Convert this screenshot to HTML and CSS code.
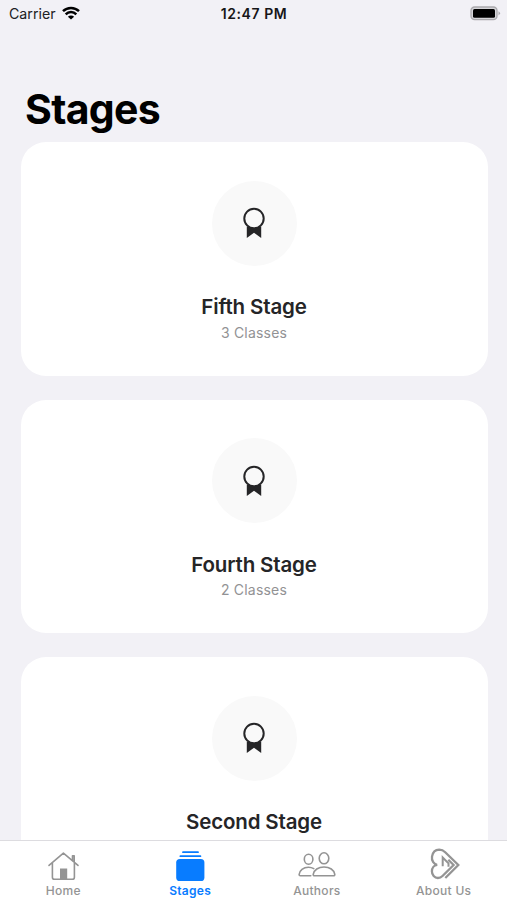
FILE: index.html
```html
<!DOCTYPE html>
<html lang="en">
<head>
<meta charset="utf-8">
<title>Stages</title>
<link rel="stylesheet" href="styles.css">
</head>
<body>
<svg class="defs" aria-hidden="true">
  <symbol id="ribbon" viewBox="0 0 24 32">
    <path d="M4.8 19.5h14.4v11.4l-7.2-5.2-7.2 5.2z" fill="#252527"/>
    <circle cx="12" cy="11.5" r="9.7" fill="#f9f9f9" stroke="#252527" stroke-width="2"/>
  </symbol>
</svg>
<div class="screen">
  <header class="status">
    <div class="status-left">
      <span class="carrier">Carrier</span>
      <svg class="wifi" viewBox="0 0 18 14" width="18" height="14">
        <path d="M1 5.2a11.4 11.4 0 0 1 16 0M3.7 8.3a7.5 7.5 0 0 1 10.6 0" fill="none" stroke="#000" stroke-width="2.5"/>
        <path d="M9 13.6 5.9 10.7a4.4 4.4 0 0 1 6.2 0z"/>
      </svg>
    </div>
    <span class="clock">12:47 PM</span>
    <div class="status-right">
      <svg viewBox="0 0 31 15" width="31" height="15">
        <rect x="1" y="1" width="26" height="12.6" rx="3.6" fill="#d6d5d9" stroke="#aaa9ad" stroke-width="1.3"/>
        <rect x="3" y="3" width="22" height="8.8" rx="1.5"/>
        <path d="M28.5 5.2q3 2.1 0 4.2z" fill="#aaa9ad"/>
      </svg>
    </div>
  </header>
  <h1>Stages</h1>
  <main class="list">
    <section class="card">
      <div class="badge"><svg class="ribbon"><use href="#ribbon"/></svg></div>
      <h2>Fifth Stage</h2>
      <p>3 Classes</p>
    </section>
    <section class="card">
      <div class="badge"><svg class="ribbon"><use href="#ribbon"/></svg></div>
      <h2>Fourth Stage</h2>
      <p>2 Classes</p>
    </section>
    <section class="card">
      <div class="badge"><svg class="ribbon"><use href="#ribbon"/></svg></div>
      <h2>Second Stage</h2>
    </section>
  </main>
  <nav class="tabs">
    <a class="tab">
      <svg viewBox="0 0 40 36" fill="none" stroke="currentColor" stroke-width="1.6" stroke-linecap="round" stroke-linejoin="round">
        <path d="M6 19.4 20.4 7.2 35 19.4M9.4 17v14.2q0 2.1 2.1 2.1h17.8q2.1 0 2.1-2.1V17M29.5 14.3V9.7h1.7v6.1"/>
        <path d="M17 22.5h7.2v10.8H17z" fill="currentColor" stroke="none"/>
      </svg>
      <span>Home</span>
    </a>
    <a class="tab active">
      <svg viewBox="0 0 40 36" fill="none" stroke="currentColor" stroke-width="1.8" stroke-linecap="round">
        <rect x="6.2" y="13" width="28.2" height="22" rx="3.6" fill="currentColor" stroke="none"/>
        <path d="M13 6.2h15M10.4 10.2h20"/>
      </svg>
      <span>Stages</span>
    </a>
    <a class="tab">
      <svg viewBox="0 0 40 36" fill="none" stroke="currentColor" stroke-width="1.6" stroke-linecap="round" stroke-linejoin="round">
        <ellipse cx="11.6" cy="13.3" rx="4.3" ry="5"/>
        <ellipse cx="27" cy="12.3" rx="4.8" ry="5.5"/>
        <path d="M13.8 29.7H3.3q-1.2 0-1.2-1.2c.3-4.2 4.3-7.3 9.3-7.3 2.2 0 3.9.5 5.4 1.4M17.5 29.7h19q1.4 0 1.3-1.3c-.6-4.5-5.2-7.4-10.8-7.4s-10.1 2.9-10.8 7.4q-.1 1.3 1.3 1.3z"/>
      </svg>
      <span>Authors</span>
    </a>
    <a class="tab">
      <svg viewBox="0 0 40 36" fill="none" stroke="currentColor" stroke-width="2.3" stroke-linejoin="miter">
        <path d="M13.2 18.8c-3-.2-5.9-4-5.2-8.2C8.7 6.500 11.600 3.800 15.200 3.700c2.500 0 4.400.9 6 2.500L34.300 19 21.300 32"/>
        <path d="M13.200 18.800c-3.100.4-5.300 3.200-5.300 6.500 0 3.700 2.700 6.700 6 6.700 1.900 0 3.200-.6 4.600-2L29.600 19l-5.300-5.300"/>
        <path d="M18.700 20.200V11.500l5.800 5.800v3.400" stroke-width="2"/>
      </svg>
      <span>About Us</span>
    </a>
  </nav>
</div>
</body>
</html>
```
FILE: styles.css
```css
* { box-sizing: border-box; }
body, h1, h2, p { margin: 0; }
body {
  height: 900px;
  overflow: hidden;
  background: #f2f1f6;
  color: #000;
  font-family: Inter, "Liberation Sans", sans-serif;
}
.defs { display: none; }
.screen {
  height: 900px;
  display: flex;
  flex-direction: column;
}
.status {
  flex: none;
  height: 28px;
  padding: 0 6px 0 9px;
  display: grid;
  grid-template-columns: 1fr auto 1fr;
  align-items: center;
  font-size: 14.2px;
}
.status-left { display: flex; align-items: center; gap: 6px; color: #202022; }
.carrier, .clock { margin-top: -2px; }
.status-right { display: flex; justify-content: flex-end; margin-top: -2px; }
.wifi { margin-top: -3px; }
.clock {
  margin-right: 2px;
  font-weight: 600;
  font-size: 14px;
  letter-spacing: 0.55px;
  color: #161618;
}
h1 {
  flex: none;
  height: 114px;
  padding: 57px 0 0 25px;
  font-size: 41px;
  line-height: 48px;
  font-weight: 700;
  letter-spacing: -0.7px;
}
.list {
  flex: 1;
  min-height: 0;
  overflow: hidden;
  padding: 0 19.5px 0 20.5px;
  display: flex;
  flex-direction: column;
  gap: 24px;
}
.card {
  flex: none;
  height: 233.5px;
  padding-top: 38.5px;
  border-radius: 25px;
  background: #fff;
  display: flex;
  flex-direction: column;
  align-items: center;
}
.badge {
  width: 85px;
  height: 85px;
  border-radius: 50%;
  background: #f9f9f9;
  display: flex;
  align-items: center;
  justify-content: center;
}
.ribbon { width: 24px; height: 32px; }
h2 {
  margin-top: 27.5px;
  font-size: 20.5px;
  line-height: 28px;
  font-weight: 600;
  letter-spacing: -0.15px;
  color: #252527;
}
p {
  margin-top: 2.500px;
  font-size: 14px;
  line-height: 18px;
  letter-spacing: 0.2px;
  color: #929294;
}
.tabs {
  flex: none;
  height: 60px;
  border-top: 1px solid #dddce0;
  background: #fff;
  display: grid;
  grid-template-columns: repeat(4, 1fr);
}
.tab {
  padding-top: 5px;
  display: flex;
  flex-direction: column;
  align-items: center;
  color: #949494;
  font-size: 12px;
  line-height: 16px;
  font-weight: 500;
  letter-spacing: 0.3px;
}
.tab svg { width: 40px; height: 36px; margin-bottom: 1px; }
.active { color: #087cff; font-weight: 600; }
```
